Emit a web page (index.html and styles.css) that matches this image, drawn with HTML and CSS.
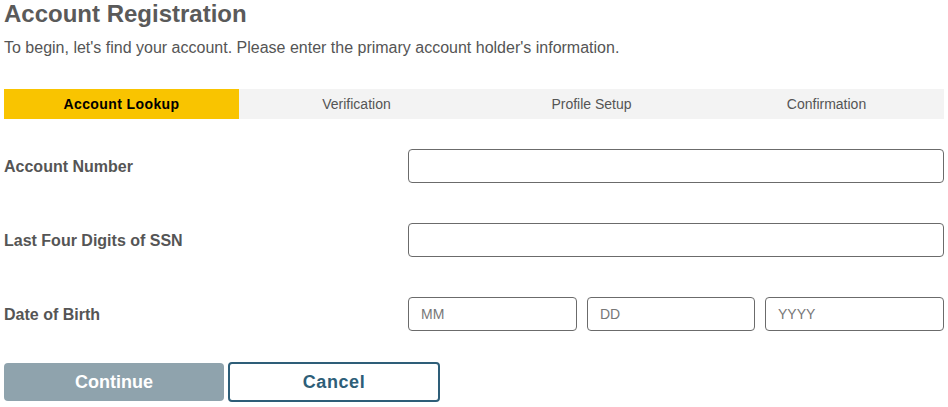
FILE: index.html
```html
<!DOCTYPE html>
<html lang="en">
<head>
  <meta charset="UTF-8" />
  <title>Account Registration</title>
  <link rel="stylesheet" href="styles.css">
</head>
<body>
  <div class="registration">
    <h1>Account Registration</h1>
    <p class="intro">To begin, let's find your account. Please enter the primary account holder's information.</p>

    <!-- Steps -->
    <ol class="steps">
      <li class="active">Account Lookup</li>
      <li>Verification</li>
      <li>Profile Setup</li>
      <li>Confirmation</li>
    </ol>

    <form class="lookup-form">
      <div class="form-row">
        <label for="account">Account Number</label>
        <div class="field"><input type="text" id="account"></div>
      </div>
      <div class="form-row">
        <label for="ssn">Last Four Digits of SSN</label>
        <div class="field"><input type="text" id="ssn"></div>
      </div>
      <div class="form-row">
        <label for="dobMonth">Date of Birth</label>
        <div class="field dob">
          <input type="text" id="dobMonth" class="mm" placeholder="MM">
          <input type="text" class="dd" placeholder="DD">
          <input type="text" class="yyyy" placeholder="YYYY">
        </div>
      </div>

      <div class="actions">
        <button type="submit" class="btn-continue" disabled>Continue</button>
        <button type="button" class="btn-cancel">Cancel</button>
      </div>
    </form>
  </div>
</body>
</html>
```

FILE: styles.css
```css
body {
  margin: 0;
  padding: 0 4px;
  font-family: Arial, "Liberation Sans", sans-serif;
  color: #555;
  background: #fff;
}

.registration h1 {
  margin: 0;
  font-size: 24px;
  line-height: 28px;
  color: #5a5a5a;
}

.intro {
  margin: 10px 0 0;
  font-size: 16px;
  line-height: 20px;
  color: #555;
}

.steps {
  list-style: none;
  margin: 31px 0 0;
  padding: 0;
  display: flex;
  background: #f3f3f3;
}

.steps li {
  flex: 1;
  height: 30px;
  line-height: 30px;
  text-align: center;
  font-size: 14px;
  color: #555;
}

.steps li.active {
  background: #f9c400;
  color: #000;
  font-weight: bold;
  letter-spacing: 0.4px;
}

.lookup-form {
  margin-top: 30px;
}

.form-row {
  display: flex;
  align-items: center;
  margin-bottom: 40px;
}

.form-row label {
  flex: 0 0 404px;
  padding-top: 2px;
  font-size: 16px;
  font-weight: bold;
  color: #555;
}

.field {
  flex: 1;
  min-width: 0;
  display: flex;
  gap: 10px;
}

.field input {
  flex: 1;
  min-width: 0;
  box-sizing: border-box;
  height: 34px;
  padding: 0 12px;
  border: 1px solid #6b6b6b;
  border-radius: 4px;
  font-family: inherit;
  font-size: 14px;
  color: #333;
}

.field input::placeholder {
  color: #777;
}

.dob .mm { flex: 0 0 169px; }
.dob .dd { flex: 0 0 168px; }

.actions {
  display: flex;
  align-items: center;
  gap: 4px;
  margin-top: -9px;
}

.actions button {
  box-sizing: border-box;
  border-radius: 4px;
  font-family: inherit;
  font-size: 18px;
  font-weight: bold;
}

.btn-continue {
  width: 220px;
  height: 38px;
  background: #8fa3ad;
  color: #fff;
  border: none;
}

.btn-cancel {
  width: 212px;
  height: 40px;
  background: #fff;
  color: #2e5e78;
  border: 2px solid #2e5e78;
  font-size: 19px;
  letter-spacing: 0.6px;
  cursor: pointer;
}
```
